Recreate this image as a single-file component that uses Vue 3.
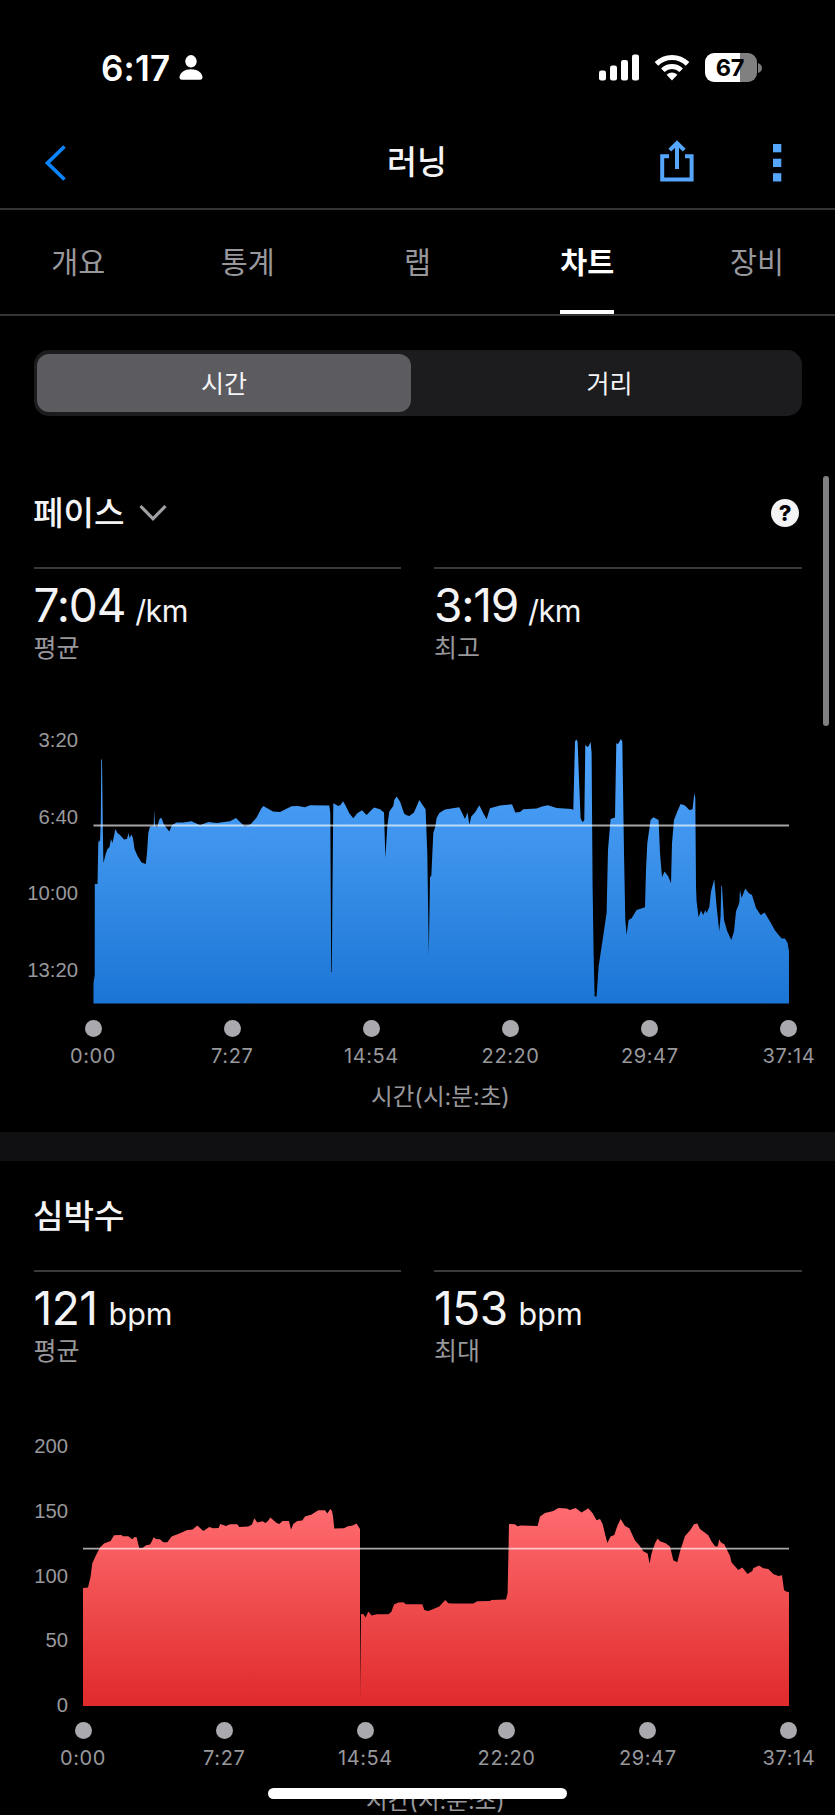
<script setup>
import { ref } from "vue";

const tabs = ["개요", "통계", "랩", "차트", "장비"];
const activeTab = ref("차트");

const modes = ["시간", "거리"];
const activeMode = ref("시간");

const times = ["0:00", "7:27", "14:54", "22:20", "29:47", "37:14"];

// x,y outline of each area, closed down to the baseline in the template
const charts = [
  {
    id: "pace",
    title: "페이스",
    picker: true,
    stats: [
      { value: "7:04", unit: "/km", label: "평균" },
      { value: "3:19", unit: "/km", label: "최고" },
    ],
    labels: ["3:20", "6:40", "10:00", "13:20"],
    viewBox: "93 730 696 274",
    left: 93.5,
    base: 1003.6,
    average: 825.5,
    top: 739,
    colors: ["#4fa4ff", "#3c92ea", "#1b75d5"],
    points:
      "93.5,983 94.7,975 94.8,884 97.5,884 98.3,843 99,840 100,842 100.8,820 101.3,759 102,760 102.8,826 103.4,863 106,853 107.5,849 109.5,847 111,839 112.4,843 114,836 115.3,829 117.4,833 120,835 124,839.5 127,839 128.5,833 129.6,838 131.5,834.5 133,838.5 134.5,849 137.3,855.5 141.6,862.5 145.8,864 147,853 148.3,833 150,826.5 153.7,826 154.3,810 155,826 157.3,827 159.3,819.5 161.3,817.5 163.5,823.5 166.5,828 169.3,831.5 172,825 176.6,822.5 183.3,822.6 191.6,821.3 200,825.3 208.3,822 216.6,823 230,821.3 236,818 240,822 245,826.6 250.6,824.3 256.6,817.6 261,809 263.3,806 273,811.6 280,812 286,809 291.6,806.3 298,806 305,807.3 310,805.3 329.3,805.6 330.3,813 331.2,972 331.8,972 332.5,887 333.3,803.3 338.3,806 340.5,805 343,801.3 345.3,805 349.3,813.3 353.3,818.3 357.3,813.3 362,810.3 366.6,815 370,811.5 374,807.6 380,809.3 384,812.6 385.4,858 387.3,826.6 389.3,811.6 393.3,806 394.3,800 396.6,796.6 400,801.6 404,813.3 406,815 409.3,816 414,812.6 419.3,800 422.6,805 425.6,809.3 427.3,853 428.8,955 430,877 431.3,876 433.3,833 435.3,826.6 436.6,818 439.3,813 445,809.6 459.3,807.3 465,819 467.6,812.6 469.3,824.6 471.3,816.6 475,812.6 479.3,805.3 483.3,813.3 486.6,819.3 490,808.3 500,805.6 512,804.3 515.3,812.6 520,812 523.3,809.3 536.6,808.6 542,806.5 548,805.3 556.6,808 571.6,809 573.3,810 575,741.6 576.3,739.5 577.6,741.6 579.3,786.6 580.6,818.3 582.6,822.3 584.3,820 585.3,745 588,747.3 590.6,742 591.6,753 592.6,886.6 593.6,953 594.6,996.6 596.6,996.6 598.6,966.6 602.6,940 606.6,913 608,850 610.6,819 615,817.6 616.3,743.3 618,744 621,739 622.3,741.6 624,853 625.3,920 626.6,935 628.6,920 631.6,918.3 636.6,910 645,907.3 646,870 647.3,843.3 650.6,820 653.3,817.3 658.6,820 660,853 662,877.3 664.6,871.6 668.3,876.6 671,883.3 672,843 674,820 677.3,811.6 680.6,804 685,805.6 689.3,810 692.6,809.3 694.3,793.3 695.3,798 696,886.6 696.6,901.6 698.6,917.3 701,910.6 703.3,915 705.3,910 706.6,913 709.3,907 711,891.6 714.3,879.3 716.6,906.6 719.3,931.6 720.6,916 721.3,885 722,886.6 724,920 727.3,931.6 731.3,940 734,931.6 736,911.6 739.3,903 740,890 741.6,898 745.3,888.6 748.6,893 752,895 756,908 760.6,915 764.6,912.6 770,921.6 775,930.6 781.6,938.6 785,938.6 787.6,943 789,951.6",
  },
  {
    id: "heart",
    title: "심박수",
    picker: false,
    stats: [
      { value: "121", unit: "bpm", label: "평균" },
      { value: "153", unit: "bpm", label: "최대" },
    ],
    labels: ["200", "150", "100", "50", "0"],
    viewBox: "83 1437 706 269",
    left: 83,
    base: 1706,
    average: 1548.7,
    top: 1508,
    colors: ["#ff6b70", "#f04e50", "#e02a2c"],
    points:
      "83,1588 88,1587.6 90.6,1576.6 92.3,1563.3 96.6,1554 100,1547.6 104,1543.6 110.6,1541 114,1535.3 121.6,1535 122.6,1536.3 128.3,1536.3 132.3,1539.3 134.6,1537 136.6,1537.3 139.3,1548.3 142.6,1548 146,1545.3 150,1544.6 152,1541 153.6,1537.3 156,1539 160,1539.3 163.3,1542.3 167.3,1542.3 171.6,1536.6 180,1533.3 186.6,1530.3 192.6,1529.6 197.3,1525.6 203.3,1531 209.3,1527 213.3,1528.3 218.6,1528 220.3,1524 226,1526 230,1524.3 237.3,1524.3 239.3,1527 248.3,1526.6 252,1524.6 254.3,1518.3 257.3,1522.6 262.6,1521.3 265.3,1523 268,1521 270.3,1517.6 276.6,1523 279.3,1524 282.6,1521 289,1521 291,1529.6 293.3,1524 297.3,1521 302.3,1520.6 305,1516.6 311.6,1514.6 318.3,1510.3 325,1510.3 327.3,1513.6 330.3,1509 332,1511 333,1516.6 334.3,1528.6 344,1528.3 347.3,1526.6 352.6,1525.6 356.6,1523.6 360,1529 360,1620 360.4,1695 361,1614 363.6,1614.3 365.6,1617.6 368.3,1611.6 371.6,1615.6 376.6,1614.3 388.3,1614.3 391.3,1612 394,1604.6 398.3,1602.6 403.3,1602.3 406,1604.3 422.3,1604.3 424.3,1610 428.3,1611 433.3,1609 439.3,1606.6 445.3,1600 448.3,1603.3 453.3,1603.6 473.3,1603.6 477.3,1601.3 490,1601 491.6,1600 506,1599.6 507.6,1593 508.3,1560 509,1524 515,1524.3 517.3,1526.3 521,1525.6 537.6,1526 540,1516.6 545,1513 553.3,1511 558.3,1508 566.6,1508.6 570,1510 575.6,1508 581.6,1512.6 588.3,1508.3 592.6,1513.3 596.6,1520.3 600,1519 602.6,1524 605.3,1535 607.3,1543 610.6,1536.6 614.3,1535 617.3,1526 620.6,1519 625,1526 629.3,1528.3 635,1540.6 639.3,1545.3 643.3,1551.3 647.6,1553.6 649.6,1563.6 651.6,1553.3 655,1543.3 657.6,1538.6 660,1541.3 665.6,1543.3 670,1546.6 673.3,1560.3 677.3,1562.3 680,1551.6 685,1536 690,1530.6 694,1524.3 697.3,1523.6 700,1529 708.3,1535.3 711.6,1541.6 715,1546.3 717.6,1546.6 719.3,1539.3 721,1542.6 724.3,1544.3 728.3,1552.6 730,1556 731.6,1562.6 738.3,1570 742.3,1567.6 747.6,1574 752.3,1571 753.3,1568.3 759,1565.6 763.3,1568.3 768.3,1569 773.3,1574 778.3,1576 782,1575.3 784,1590 785.6,1591.3 789,1592.3",
  },
];
</script>

<template>
  <div class="screen">
    <div class="status-bar">
      <span class="clock">6:17</span>
      <svg class="person" width="24" height="25" viewBox="0 0 24 25" fill="#fff">
        <ellipse cx="12" cy="6.3" rx="5.7" ry="6.2" />
        <path d="M0.5 22.5C0.5 17.5 6 14.2 12 14.2S23.5 17.5 23.5 22.5Q23.5 24.8 21 24.8H3Q0.5 24.8 0.5 22.5Z" />
      </svg>
      <svg class="signal" width="41" height="27" viewBox="0 0 41 27" fill="#fff">
        <rect x="0" y="16.5" width="7" height="10" rx="2.2" />
        <rect x="11" y="11.5" width="7" height="15" rx="2.2" />
        <rect x="22" y="6" width="7" height="20.5" rx="2.2" />
        <rect x="33" y="0.5" width="7" height="26" rx="2.2" />
      </svg>
      <svg class="wifi" width="36" height="27" viewBox="0 0 36 27" fill="none" stroke="#fff" stroke-width="5">
        <path d="M2.4 9.9C11.3 1.2 24.7 1.2 33.6 9.9" />
        <path d="M8.8 16.2C14 11.2 22 11.2 27.2 16.2" />
        <path d="M12.6 20.8Q18 16.4 23.4 20.8L18 26.4Z" fill="#fff" stroke="none" />
      </svg>
      <div class="battery"><span>67</span></div>
      <svg class="battery-tip" width="4" height="10" viewBox="0 0 4 10">
        <path d="M0 0Q4 1.5 4 5T0 10Z" fill="#7c7c7c" />
      </svg>
    </div>

    <header class="nav-bar">
      <button class="back">
        <svg width="24" height="38" viewBox="0 0 24 38" fill="none" stroke="#0a84ff" stroke-width="3.7">
          <path d="M20.5 2.5L3.5 19L20.5 35.5" />
        </svg>
      </button>
      <h1>러닝</h1>
      <div class="actions">
        <svg class="share" width="34" height="42" viewBox="0 0 34 42" fill="none" stroke="#55a6fc" stroke-width="4">
          <path d="M9 16.3H2.2V39.5H31.6V16.3H25" />
          <path d="M17 29V3" />
          <path d="M9.8 10.2L17 3L24.2 10.2" />
        </svg>
        <svg width="9" height="38" viewBox="0 0 9 38" fill="#55a6fc">
          <rect x="0" y="0" width="8.3" height="8.3" />
          <rect x="0" y="14.7" width="8.3" height="8.3" />
          <rect x="0" y="29.2" width="8.3" height="8.3" />
        </svg>
      </div>
    </header>

    <nav class="tabs">
      <button
        v-for="tab in tabs"
        :key="tab"
        :class="{ active: tab === activeTab }"
        @click="activeTab = tab"
      >{{ tab }}</button>
    </nav>

    <div class="segment">
      <button
        v-for="mode in modes"
        :key="mode"
        :class="{ selected: mode === activeMode }"
        @click="activeMode = mode"
      >{{ mode }}</button>
    </div>

    <section v-for="chart in charts" :key="chart.id" class="card" :class="chart.id">
      <div class="card-title">
        <h2>{{ chart.title }}</h2>
        <svg v-if="chart.picker" class="chevron" width="28" height="18" viewBox="0 0 28 18" fill="none" stroke="#a0a0a4" stroke-width="3.2">
          <path d="M1.5 2L14 14.8L26.5 2" />
        </svg>
        <span v-if="chart.picker" class="help">?</span>
      </div>

      <div class="stats">
        <div v-for="stat in chart.stats" :key="stat.label" class="stat">
          <p class="value">{{ stat.value }}<span>{{ stat.unit }}</span></p>
          <p class="label">{{ stat.label }}</p>
        </div>
      </div>

      <div class="plot">
        <div class="y-axis">
          <span v-for="label in chart.labels" :key="label">{{ label }}</span>
        </div>
        <svg class="area" :viewBox="chart.viewBox">
          <defs>
            <linearGradient :id="chart.id + '-fill'" gradientUnits="userSpaceOnUse" x1="0" x2="0" :y1="chart.top" :y2="chart.base">
              <stop offset="0" :stop-color="chart.colors[0]" />
              <stop offset="0.45" :stop-color="chart.colors[1]" />
              <stop offset="1" :stop-color="chart.colors[2]" />
            </linearGradient>
          </defs>
          <polygon
            :points="`${chart.left},${chart.base} ${chart.points} 789,${chart.base}`"
            :fill="`url(#${chart.id}-fill)`"
          />
          <line :x1="chart.left" x2="789" :y1="chart.average" :y2="chart.average" stroke="#fff" stroke-opacity="0.65" stroke-width="1.8" />
        </svg>
      </div>

      <div class="x-axis">
        <div v-for="time in times" :key="time" class="tick">
          <i></i>
          <span>{{ time }}</span>
        </div>
      </div>
      <p class="caption">시간(시:분:초)</p>
    </section>

    <div class="scrollbar"></div>
    <div class="home-indicator"></div>
  </div>
</template>

<style>
body {
  background: #000;
}
</style>

<style scoped>
.screen {
  position: relative;
  width: 835px;
  height: 1815px;
  overflow: hidden;
  background: #000;
  color: #f4f4f6;
  font-family: Inter, "Noto Sans CJK KR", sans-serif;
}
h1,
h2,
p {
  margin: 0;
}
button {
  padding: 0;
  border: 0;
  background: none;
  color: inherit;
  font: inherit;
}
svg {
  display: block;
  flex: none;
}
.status-bar {
  display: flex;
  align-items: center;
  box-sizing: border-box;
  height: 117px;
  padding: 18px 0 0 101px;
}
.clock {
  width: 78px;
  color: #fff;
  font-size: 35px;
  font-weight: 600;
  letter-spacing: 0.2px;
  line-height: 40px;
}
.signal {
  margin-left: 396px;
}
.wifi {
  margin-left: 14px;
}
.battery {
  width: 52px;
  height: 29px;
  margin-left: 15px;
  border-radius: 9px;
  background: linear-gradient(90deg, #fff 67%, #808080 67%);
  color: #000;
  font-size: 23.5px;
  font-weight: 700;
  letter-spacing: -0.2px;
  line-height: 29px;
  text-align: center;
}
.battery span {
  margin-right: 2px;
}
.battery-tip {
  margin-left: 1px;
}
.nav-bar {
  display: grid;
  grid-template-columns: 1fr auto 1fr;
  align-items: center;
  box-sizing: border-box;
  height: 93px;
  padding: 0 53px 0 44px;
  border-bottom: 2px solid #343436;
}
.back {
  justify-self: start;
}
.nav-bar h1 {
  padding-left: 8px;
  font-size: 32.5px;
  font-weight: 500;
  line-height: 40px;
}
.actions {
  display: flex;
  align-items: center;
  justify-self: end;
  gap: 79px;
}
.share {
  margin-bottom: 4px;
}
.tabs {
  display: grid;
  grid-template-columns: repeat(5, 169.7px);
  justify-content: center;
  justify-items: center;
  height: 104px;
  border-bottom: 2px solid #343436;
  color: #98989c;
  font-size: 29.3px;
}
.tabs button {
  box-sizing: border-box;
  height: 104px;
  border-bottom: 4px solid transparent;
}
.tabs .active {
  border-color: #fff;
  color: #fff;
  font-weight: 700;
}
.segment {
  display: grid;
  grid-template-columns: 374px 1fr;
  box-sizing: border-box;
  height: 66px;
  margin: 34px 33.5px 0;
  padding: 4px 3.5px;
  border-radius: 15px;
  background: #1c1c1f;
  font-size: 25px;
}
.segment button {
  padding-bottom: 3px;
  border-radius: 12px;
}
.segment button:last-child {
  padding-left: 10px;
}
.segment .selected {
  background: #5b5b60;
}
.card-title {
  display: flex;
  align-items: center;
  height: 40px;
  padding: 0 36px 0 33px;
}
.card-title h2 {
  font-size: 33.2px;
  font-weight: 500;
  line-height: 40px;
}
.chevron {
  margin-left: 14px;
}
.help {
  width: 28px;
  height: 28px;
  margin-left: auto;
  border-radius: 50%;
  background: #f4f4f6;
  color: #000;
  font-size: 22px;
  font-weight: 800;
  line-height: 28px;
  text-align: center;
}
.pace {
  height: 639px;
  padding-top: 77px;
  border-bottom: 29px solid #101012;
}
.heart {
  padding-top: 35px;
}
.stats {
  display: grid;
  grid-template-columns: 1fr 1fr;
  gap: 33px;
  padding: 34px 33.5px 0;
}
.stat {
  height: 98px;
  border-top: 2px solid #3a3a3c;
}
.value {
  height: 52px;
  padding-top: 8px;
  font-size: 46px;
  letter-spacing: -0.5px;
  line-height: 56px;
}
.value span {
  margin-left: 11px;
  font-size: 30.5px;
  letter-spacing: 0;
}
.pace .value {
  letter-spacing: -1.2px;
}
.pace .value span {
  margin-left: 10px;
  letter-spacing: -0.6px;
}
.label {
  padding-top: 1px;
  color: #98989c;
  font-size: 25px;
  line-height: 36px;
}
.plot {
  display: flex;
  margin-top: 63px;
}
.y-axis {
  display: flex;
  flex-direction: column;
  justify-content: space-between;
  width: 78px;
  height: 250px;
  margin-right: 15px;
  color: #98989c;
  font-family: "Liberation Sans", sans-serif;
  font-size: 20.3px;
  line-height: 20px;
  text-align: right;
}
.area {
  width: 696px;
  height: 274px;
}
.heart .plot {
  height: 269px;
  margin-top: 67px;
}
.heart .y-axis {
  width: 68px;
  height: 279px;
  margin-top: -1px;
}
.heart .area {
  width: 706px;
  height: 269px;
}
.x-axis {
  display: flex;
  justify-content: space-between;
  margin: 15.5px 46px 0 93px;
}
.heart .x-axis {
  margin-left: 83px;
}
.tick {
  display: flex;
  flex-direction: column;
  align-items: center;
  width: 0;
  color: #98989c;
  font-size: 20px;
  letter-spacing: 0.6px;
  line-height: 24px;
}
.tick i {
  width: 17px;
  height: 17px;
  margin-bottom: 7.5px;
  border-radius: 50%;
  background: #aaa9ad;
}
.caption {
  margin: 11px 0 0 46px;
  color: #98989c;
  font-size: 23.5px;
  line-height: 36px;
  text-align: center;
}
.heart .caption {
  margin: 12.5px 0 0 36px;
}
.scrollbar {
  position: absolute;
  top: 476px;
  right: 6px;
  width: 6px;
  height: 250px;
  border-radius: 3px;
  background: #808082;
}
.home-indicator {
  position: absolute;
  top: 1788px;
  left: 268px;
  width: 299px;
  height: 11px;
  border-radius: 6px;
  background: #fff;
}
</style>
